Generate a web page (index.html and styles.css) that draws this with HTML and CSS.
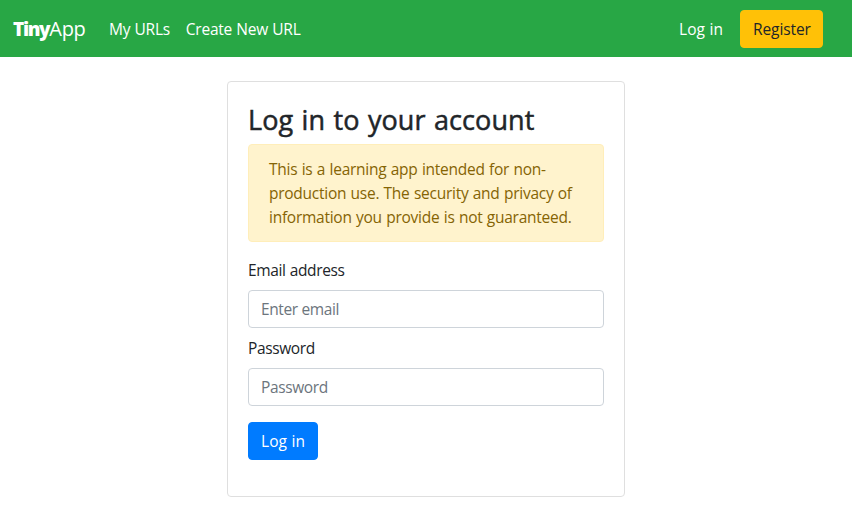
FILE: index.html
```html
<!DOCTYPE html>
<html lang="en">
<head>
<meta charset="utf-8">
<title>TinyApp</title>
<link rel="stylesheet" href="styles.css">
</head>
<body>
<nav class="navbar">
  <a class="brand" href="#"><b>Tiny</b>App</a>
  <a class="nav-link" href="#">My URLs</a>
  <a class="nav-link" href="#">Create New URL</a>
  <a class="nav-link login-link" href="#">Log in</a>
  <a class="btn btn-warning" href="#">Register</a>
</nav>
<main class="card">
  <h3>Log in to your account</h3>
  <div class="alert">
    This is a learning app intended for non-<br>
    production use. The security and privacy of<br>
    information you provide is not guaranteed.
  </div>
  <form>
    <label for="email">Email address</label>
    <input id="email" type="email" placeholder="Enter email">
    <label for="password">Password</label>
    <input id="password" type="password" placeholder="Password">
    <button class="btn btn-primary" type="button">Log in</button>
  </form>
</main>
</body>
</html>
```
FILE: styles.css
```css
* { box-sizing: border-box; }
body {
  margin: 0;
  background: #fff;
  color: #212529;
  font: 15.5px/24px "Segoe UI", "Open Sans", "Noto Sans", sans-serif;
  letter-spacing: -0.26px;
  word-spacing: 0.6px;
}
a { text-decoration: none; }
.navbar {
  display: flex;
  align-items: center;
  height: 57px;
  padding: 0 29px 0 13px;
  background: #28a745;
}
.brand { width: 72px; margin-right: 16px; color: #fff; font-size: 20px; line-height: 30px; letter-spacing: -0.3px; white-space: nowrap; }
.brand b { font-weight: 800; font-size: 19px; letter-spacing: -1.35px; }
.nav-link { padding: 8px; color: #fff; white-space: nowrap; }
.login-link { margin-left: auto; margin-right: 9px; letter-spacing: 0; }
.btn {
  height: 38px;
  padding: 6px 12px;
  border: 1px solid;
  border-radius: 4px;
  font: inherit;
  word-spacing: inherit;
  white-space: nowrap;
}
.btn-warning { width: 83px; background: #ffc107; border-color: #ffc107; color: #212529; letter-spacing: -0.1px; }
.btn-primary { display: block; width: 70px; margin-top: 16px; background: #007bff; border-color: #007bff; color: #fff; letter-spacing: 0; }
.card {
  width: 398px;
  height: 416px;
  margin: 24px auto 0;
  padding: 20px;
  border: 1px solid #dfdfdf;
  border-radius: 4px;
}
h3 {
  margin: 2px 0 8px;
  font-size: 27px;
  line-height: 32px;
  font-weight: 500;
  letter-spacing: 0.1px;
  word-spacing: 1.2px;
  -webkit-text-stroke: 0.5px currentColor;
}
.alert {
  height: 98px;
  margin-bottom: 16px;
  padding: 12px 20px;
  border: 1px solid #ffeeba;
  border-radius: 4px;
  background: #fff3cd;
  color: #856404;
  white-space: nowrap;
}
label { display: block; margin-bottom: 8px; letter-spacing: -0.38px; }
input {
  display: block;
  width: 100%;
  height: 38px;
  margin-bottom: 8px;
  padding: 6px 12px;
  border: 1px solid #ced4da;
  border-radius: 4px;
  font: inherit;
  letter-spacing: -0.38px;
}
input::placeholder { color: #6c757d; opacity: 1; }
```
